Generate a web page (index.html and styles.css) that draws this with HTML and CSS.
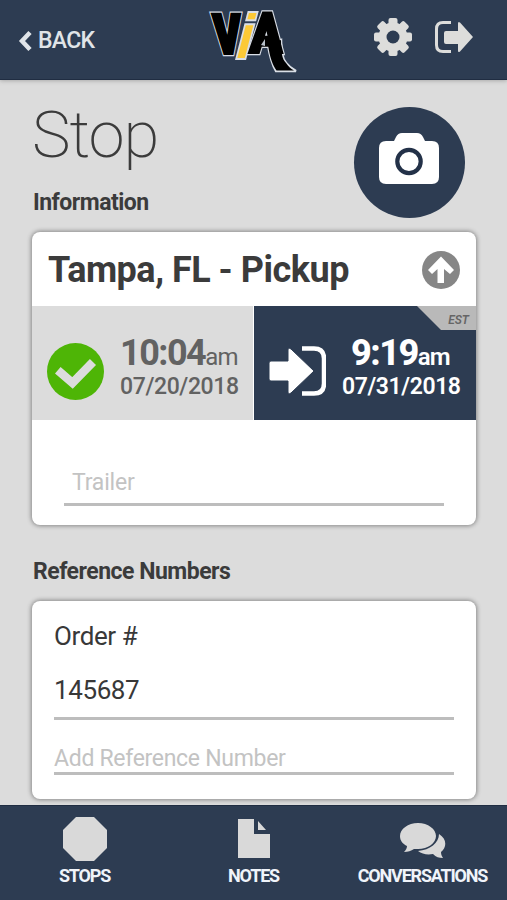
FILE: index.html
```html
<!DOCTYPE html>
<html lang="en">
<head>
<meta charset="utf-8">
<title>Stop</title>
<link rel="stylesheet" href="styles.css">
</head>
<body>
<header class="topbar">
  <a class="back"><svg width="15" height="22" viewBox="0 0 15 22"><path d="M12 2.500 4 11l8 8.500" fill="none" stroke="currentColor" stroke-width="4.500"/></svg><span>BACK</span></a>
  <svg class="logo" width="92" height="79" viewBox="0 -3 92 79">
    <g class="logo-edge">
      <text transform="matrix(.75 0 .06 1 7 50)">V</text>
      <text transform="matrix(.85 0 -.04 1 42 49)">A</text>
      <text class="logo-i" transform="matrix(.88 0 -.26 1 25.500 54.500)">i</text>
      <path d="M60 42l13-5c0 12 1 19 5 23 3 4 6 6 10 8H68C64 61 62 54 60 42z"/>
    </g>
    <g class="logo-body">
      <text transform="matrix(.75 0 .06 1 7 50)">V</text>
      <text transform="matrix(.85 0 -.04 1 42 49)">A</text>
      <path d="M60 42l13-5c0 12 1 19 5 23 3 4 5 6 8 7.500H68.500C64 61 62 54 60 42z" stroke="none"/>
      <path d="M57 36v7l-4-1z" fill="#b8c0ca" stroke="none"/>
    </g>
    <text class="logo-i logo-road" transform="matrix(.88 0 -.26 1 25.500 54.500)">i</text>
  </svg>
  <div class="actions">
    <svg width="40" height="40" viewBox="-20 -20 40 40"><g fill="currentColor"><rect id="tooth" x="-4.500" y="-19" width="9" height="38" rx="2"/><use href="#tooth" transform="rotate(45)"/><use href="#tooth" transform="rotate(90)"/><use href="#tooth" transform="rotate(135)"/><circle r="14.500"/></g><circle r="6.500" fill="#2d3c52"/></svg>
    <svg width="40" height="34" viewBox="0 0 40 34"><path d="M17 2.500H9Q2.500 2.500 2.500 9v16q0 6.500 6.500 6.500h8" fill="none" stroke="currentColor" stroke-width="3"/><path d="M12 11h12V3.500q0-2.500 2-1L39 17 26 31.500q-2 1.500-2-1V24H12q-2 0-2-2v-9q0-2 2-2z" fill="currentColor"/></svg>
  </div>
</header>
<main class="content">
  <div class="intro">
    <div><h1>Stop</h1><h2>Information</h2></div>
    <button class="camera"><svg width="62" height="54" viewBox="0 0 62 54"><path d="M8 9h8l2-4q2-4 6-4h15q4 0 6 4l2 4h7q7 0 7 7v29q0 7-7 7H8q-7 0-7-7V16q0-7 7-7z" fill="#fff"/><circle cx="31" cy="29.500" r="11.700" fill="#fff" stroke="#233148" stroke-width="4.200"/></svg></button>
  </div>
  <section class="card stop">
    <div class="title"><h3>Tampa, FL - Pickup</h3>
      <svg width="38" height="38" viewBox="0 0 38 38"><circle cx="19" cy="19" r="19" fill="#868686"/><path d="M19 5.500 32 19l-4 4-6-5v14h-6.500V18L10 23l-4-4z" fill="#fff"/></svg></div>
    <div class="times">
      <div class="arrived">
        <svg width="57" height="57" viewBox="0 0 57 57"><circle cx="28.500" cy="28.500" r="28.500" fill="#4eb506"/><path d="m14 30 11.500 10L43 22" fill="none" stroke="#dcdcdc" stroke-width="8.500" stroke-linecap="square"/></svg>
        <div class="when"><p class="hour"><b>10:04</b>am</p><p class="date">07/20/2018</p></div>
      </div>
      <div class="departs">
        <svg width="58" height="50" viewBox="0 0 58 50"><path d="M34 2.500h12q10 0 10 10v25q0 10-10 10H34" fill="none" stroke="#fff" stroke-width="4.500"/><path d="M3 15h17V4q0-3 3-1l23 22-23 22q-3 2-3-1V35H3q-2 0-2-2V17q0-2 2-2z" fill="#fff" stroke="#2d3c52"/></svg>
        <div class="when"><p class="hour"><b>9:19</b>am</p><p class="date">07/31/2018</p></div>
        <span class="est">EST</span>
      </div>
    </div>
    <div class="field trailer">Trailer</div>
  </section>
  <h2 class="refs">Reference Numbers</h2>
  <section class="card order">
    <p class="label">Order #</p>
    <div class="field value">145687</div>
    <div class="field add">Add Reference Number</div>
  </section>
</main>
<nav class="tabs">
  <a class="tab"><svg width="46" height="46" viewBox="0 0 46 46"><path d="M14 1h18l13 13v18L32 45H14L1 32V14z" fill="currentColor"/></svg><span>STOPS</span></a>
  <a class="tab"><svg width="32" height="46" viewBox="0 0 32 46"><path d="M0 3h16v15h16v24H0zM20 5l8 9h-8z" fill="currentColor"/></svg><span>NOTES</span></a>
  <a class="tab"><svg width="46" height="46" viewBox="0 0 46 46"><path d="M39 18c8 5 8 13 2 18 0 3 1 4 2 6-4 0-7-1-10-4-6 1-11 0-15-3 12-1 21-8 21-17z" fill="currentColor"/><path d="M18 7c10 0 18 6 18 13s-8 13-18 13h-4c-3 2-6 3-10 3 2-2 3-4 3-6-4-2-7-5-7-10C0 13 8 7 18 7z" fill="currentColor"/></svg><span>CONVERSATIONS</span></a>
</nav>
</body>
</html>
```
FILE: styles.css
```css
* { box-sizing: border-box; margin: 0; }
body { width: 507px; height: 900px; overflow: hidden; display: flex; flex-direction: column; background: #dcdcdc; color: #3b3b3b; font-family: Roboto, sans-serif; }
svg { display: block; flex: none; }
.topbar { height: 80px; flex: none; display: grid; grid-template-columns: 208px 1fr 85px; background: #2d3c52; border-bottom: 1px solid #202d42; color: #e0e4e8; box-shadow: 0 1px 4px #aaa; }
.back { display: flex; align-items: center; gap: 5px; padding: 2px 0 0 18px; font-size: 23px; font-weight: 500; letter-spacing: -.7px; }
.logo text { font: 900 54px Roboto, sans-serif; }
.logo .logo-i { font: 700 62px "Liberation Sans", sans-serif; }
.logo-edge { fill: #d9dee6; stroke: #d9dee6; stroke-width: 6.5px; }
.logo-edge .logo-i { stroke-width: 4px; }
.logo-edge path { stroke-width: 2.5px; }
.logo-body { fill: #000; stroke: #000; stroke-width: 4px; }
.logo-road { fill: #fcc936; }
.actions { display: flex; align-items: center; gap: 21px; justify-content: flex-end; padding: 0 33px 5px 0; width: 134px; justify-self: end; color: #dddddb; }
.content { height: 725px; flex: none; padding: 0 31px 0 32px; }
.intro { height: 152px; display: flex; justify-content: space-between; }
h1 { font-size: 65px; font-weight: 200; line-height: 78px; margin-top: 16px; letter-spacing: -1px; }
h2 { font-size: 23px; line-height: 28px; font-weight: 700; letter-spacing: -.5px; padding-left: 1px; }
.intro h2 { margin-top: 15px; }
.camera { width: 111px; height: 111px; margin: 27px 11px 0 0; padding: 0 1px 7px 0; border: 0; border-radius: 50%; background: #2d3c52; display: flex; align-items: center; justify-content: center; }
.card { background: #fff; border-radius: 8px; box-shadow: 0 0 4px 1px #888; overflow: hidden; }
.stop { height: 293px; }
.title { height: 74px; display: flex; align-items: center; justify-content: space-between; padding: 2px 16px 0; }
h3 { font-size: 36px; line-height: 42px; font-weight: 700; letter-spacing: -.5px; }
.times { height: 114px; display: grid; grid-template-columns: 221px 1px 222px; }
.arrived, .departs { display: flex; align-items: center; position: relative; }
.arrived { background: #dcdcdc; color: #626262; padding: 16px 0 0 15px; gap: 16px; }
.departs { grid-column: 3; background: #2d3c52; color: #fff; padding: 16px 0 0 14px; gap: 16px; }
.when { text-align: right; margin-top: -11px; }
.hour { font-size: 24px; line-height: 36px; letter-spacing: -.9px; padding: 3px 1px 0 0; }
.hour b { font-size: 36px; font-weight: 700; letter-spacing: -1.5px; }
.date { font-size: 23px; line-height: 24px; letter-spacing: -.4px; font-weight: 500; }
.departs .date, .departs .hour { font-weight: 600; }
.departs .hour { padding-right: 11px; }
.departs b { font-weight: 800; }
.est { position: absolute; top: 0; right: 0; width: 59px; height: 24px; padding: 0 7px 0 0; background: #b9b9b9; clip-path: polygon(0 0, 100% 0, 100% 100%, 24px 100%); text-align: right; font: italic 600 12px/28px Roboto, sans-serif; color: #656565; }
.field { border-bottom: 3px solid #bdbdbd; font-size: 23px; color: #c3c3c3; }
.trailer { margin: 47px 32px 0; height: 39px; padding-left: 8px; line-height: 32px; letter-spacing: -.2px; }
.refs { margin: 33px 0 15px; }
.order { height: 198px; padding: 18px 22px 0; color: #383838; }
.label { font-size: 26px; line-height: 34px; letter-spacing: -.4px; }
.value { height: 67px; padding-top: 20px; font-size: 26px; line-height: 34px; color: #383838; letter-spacing: -.4px; }
.add { height: 55px; padding-top: 25px; line-height: 28px; letter-spacing: -.3px; }
.tabs { position: relative; height: 95px; display: grid; grid-template-columns: repeat(3, 169px); background: #2d3c52; border-top: 1px solid #202d42; color: #d9d9d9; }
.tab { display: flex; flex-direction: column; align-items: center; padding-top: 10px; font-size: 18px; line-height: 27px; font-weight: 700; letter-spacing: -1.2px; }
.tab span { color: #f0f4fa; }
```
